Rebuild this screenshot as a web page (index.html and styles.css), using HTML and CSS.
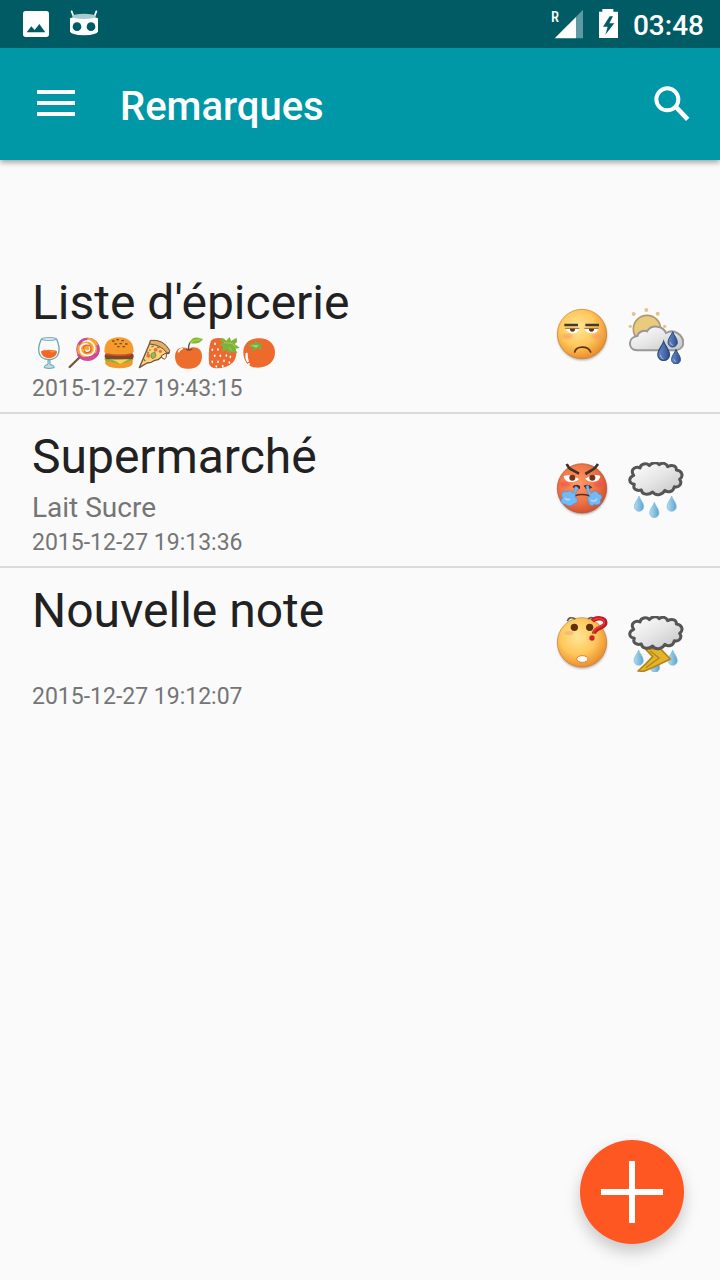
FILE: index.html
```html
<!DOCTYPE html>
<html lang="fr">
<head>
<meta charset="utf-8">
<meta name="viewport" content="width=device-width, initial-scale=1">
<title>Remarques</title>
<link rel="stylesheet" href="styles.css">
</head>
<body>
<svg class="defs" aria-hidden="true">
  <defs>
    <radialGradient id="yellow" cx=".42" cy=".38" r=".65"><stop offset="0" stop-color="#ffe596"/><stop offset=".55" stop-color="#ffc95c"/><stop offset="1" stop-color="#e8892a"/></radialGradient>
    <radialGradient id="red" cx=".42" cy=".4" r=".65"><stop offset="0" stop-color="#ff9a68"/><stop offset=".55" stop-color="#f07848"/><stop offset="1" stop-color="#d04c2c"/></radialGradient>
    <linearGradient id="cloud" x1="0" y1="0" x2="1" y2="1"><stop offset="0" stop-color="#fff"/><stop offset=".5" stop-color="#e6e6e6"/><stop offset="1" stop-color="#c2c2c2"/></linearGradient>
    <linearGradient id="drop" x1="0" y1="0" x2="1" y2="0"><stop offset="0" stop-color="#b4dcf0"/><stop offset="1" stop-color="#5aa4d0"/></linearGradient>
    <linearGradient id="navy" x1="0" y1="0" x2="1" y2="0"><stop offset="0" stop-color="#6b8fc8"/><stop offset="1" stop-color="#2d4f92"/></linearGradient>
    <filter id="soft" x="-20%" y="-20%" width="140%" height="140%"><feGaussianBlur stdDeviation="2.5"/></filter>
    <path id="storm" d="M266 76C254 58 272 48 285 54C287 41 305 37 313 47C322 36 336 36 343 44C352 36 364 40 368 50C382 43 395 48 394 60C411 62 417 78 404 88C413 101 402 114 388 110C385 126 369 129 360 121C351 137 331 138 323 126C309 137 291 134 289 120C274 124 262 116 268 103C250 99 250 83 266 76Z" fill="url(#cloud)" stroke="#555" stroke-width="9" stroke-linejoin="round"/>
    <path id="raindrop" d="M0-24C4-12 14-4 14 8A14 14 0 0 1-14 8C-14-4-4-12 0-24Z"/>
  </defs>
</svg>

<header class="top">
  <div class="status">
    <div class="status-group notices">
      <svg width="28" height="28" viewBox="66 30 84 84" aria-label="Image"><rect x="69" y="33" width="78" height="78" rx="8" fill="#fff"/><path d="M80 97L94 79L104 90L118 72L136 97Z" fill="#005b64"/></svg>
      <svg width="30" height="28" viewBox="207 30 90 84" aria-label="Système"><path d="M214 32L221 50M290 32L283 50" stroke="#fff" stroke-width="5"/><path d="M210 55Q252 36 294 55V94Q292 105 252 106Q212 105 210 94Z" fill="#fff"/><ellipse cx="252" cy="49" rx="35" ry="8" fill="#a5cdd0"/><circle cx="231" cy="80" r="13" fill="#005b64"/><circle cx="273" cy="80" r="13" fill="#005b64"/></svg>
    </div>
    <div class="status-group system">
      <svg width="33" height="30" viewBox="63 27 99 90" aria-label="Réseau"><path d="M138 50L159 29V115H138Z" fill="#5e9a9f"/><path d="M74 115L138 51V115Z" fill="#fff"/><text x="63" y="67" class="roaming">R</text></svg>
      <svg class="battery" width="21" height="30" viewBox="207 27 63 90" aria-label="Batterie"><path d="M220 27H253V35H267V114H210V35H220Z" fill="#fff"/><path d="M242 49L222 80H236L229 104L256 70H241L252 49Z" fill="#005b64"/></svg>
      <time class="clock">03:48</time>
    </div>
  </div>
  <div class="bar">
    <button class="icon-button" aria-label="Menu"><svg width="40" height="30" viewBox="108 267 120 90"><path d="M111 276H225M111 309H225M111 342H225" stroke="#fff" stroke-width="12"/></svg></button>
    <h1 class="heading">Remarques</h1>
    <button class="icon-button" aria-label="Rechercher"><svg width="38" height="38" viewBox="369 255 114 114"><circle cx="412" cy="298" r="33" fill="none" stroke="#fff" stroke-width="12"/><path d="M435 319L442 325L473 358" fill="none" stroke="#fff" stroke-width="14"/></svg></button>
  </div>
</header>

<main class="content">
  <ul class="notes">
    <li class="note">
      <div class="note-text">
        <h2 class="note-title">Liste d'épicerie</h2>
        <div class="note-body foods">
          <svg viewBox="36 33 105 105"><path d="M63 79Q86 70 111 79C111 91 101 99 87 100C73 99 64 91 63 79Z" fill="#f26722"/><path d="M66 78Q76 70 88 79T109 76" fill="#fa8b42"/><path d="M64 43C50 73 53 103 87 104C120 103 123 73 110 43Z" fill="none" stroke="#6ba5b5" stroke-width="4"/><ellipse cx="87" cy="42" rx="23" ry="4" fill="#edf7fa" stroke="#6ba5b5" stroke-width="3"/><path d="M84 105H90V118Q103 120 103 128Q87 133 72 128Q72 120 84 118Z" fill="#bddbe3" stroke="#6ba5b5" stroke-width="3"/></svg>
          <svg viewBox="141 33 105 105"><path d="M183 93L149 126" stroke="#785340" stroke-width="7" stroke-linecap="round"/><circle cx="204" cy="73" r="35" fill="#d34c9c"/><path d="M204 38C231 39 244 66 235 86C229 80 219 88 204 95C190 99 180 94 175 87C165 66 178 40 204 38Z" fill="#f8a62c"/><path d="M187 50C211 39 229 60 222 79C214 97 184 94 181 75C179 56 199 52 208 63C217 76 199 85 196 74" fill="none" stroke="#fff" stroke-width="5"/><path d="M176 59Q186 41 202 42M233 60Q239 82 226 94M196 103Q182 101 174 88" fill="none" stroke="#c94aa0" stroke-width="8"/><path d="M190 72C190 56 213 57 213 72C213 85 195 87 193 76" fill="none" stroke="#eb5b44" stroke-width="4"/></svg>
          <svg viewBox="246 33 105 105"><path d="M256 103H338V116Q334 129 297 130Q258 129 256 115Z" fill="#f49a29"/><path d="M253 103Q260 115 270 109Q278 117 287 112Q295 124 307 111Q318 118 324 110Q334 112 341 102L335 96H257Z" fill="#8ab53c"/><path d="M259 99Q285 108 333 99L312 110L300 117L288 109Z" fill="#f9d65b"/><rect x="254" y="85" width="87" height="18" rx="9" fill="#85442e"/><path d="M253 80Q252 38 297 37Q341 38 341 80Q338 91 297 91Q254 90 253 80Z" fill="#f59a2b"/><path d="M257 84Q297 93 337 84L332 91Q296 95 259 91Z" fill="#c95132"/><path d="M278 48h4M291 44h4M306 47h4M285 57h4M300 56h4M317 57h4M293 65h4M309 65h4" stroke="#704827" stroke-width="4" stroke-linecap="round"/></svg>
          <svg viewBox="-39 33 105 105"><path d="M2 48Q39 42 58 81Q56 89 49 84L42 90Q33 97 24 104Q18 106 12 107Q3 114-9 114L-32 128Z" fill="#fcd27b" stroke="#71513e" stroke-width="4" stroke-linejoin="round"/><path d="M1 46Q41 42 59 76Q59 86 49 82Q34 60-1 57Z" fill="#e6ad64" stroke="#71513e" stroke-width="3"/><path d="M49 84V97Q44 107 36 99L34 92Z" fill="#fff3cc" stroke="#71513e" stroke-width="3"/><g fill="#f07048"><circle cx="17" cy="74" r="6"/><circle cx="-5" cy="92" r="6"/><circle cx="31" cy="79" r="5"/><circle cx="0" cy="75" r="3"/></g><path d="M-11 80L-3 82L-8 88M4 86L15 81L18 94L9 101L3 97Z" fill="#9eb650" stroke="#60743a" stroke-width="2"/><path d="M4 66l7-3M-19 103l5 5M21 66l8 3" stroke="#6d7b45" stroke-width="4"/></svg>
          <svg viewBox="66 33 105 105"><path d="M115 72C130 61 158 67 156 96C154 124 132 133 115 131C95 133 76 122 75 96C75 69 96 62 115 72Z" fill="#ed6d2c"/><path d="M108 72Q116 79 127 71" fill="none" stroke="#8c4426" stroke-width="4"/><path d="M116 75Q114 60 122 50" fill="none" stroke="#654536" stroke-width="4"/><path d="M119 53Q126 34 145 38L159 42Q146 62 119 53Z" fill="#87b92f"/><path d="M122 52Q136 43 151 44" fill="none" stroke="#abd65a" stroke-width="3"/><path d="M86 80Q89 73 96 71" stroke="#fff" stroke-width="5" stroke-linecap="round" fill="none"/></svg>
          <svg viewBox="171 33 105 105"><path d="M183 47Q192 36 219 40L257 73Q264 91 250 111Q231 131 196 130Q180 128 177 115Q174 69 183 47Z" fill="#ed6930"/><path d="M207 43L222 41L228 48L239 36L243 48L260 38L261 51L254 57L269 68L255 72L263 85L247 81L237 85L229 75L216 80L218 64L207 61L218 53Z" fill="#7fb23b"/><path d="M222 53L247 55L258 68M237 67L246 77" fill="none" stroke="#a9cf59" stroke-width="3"/><path d="M195 55v3M187 73v3M204 72v3M194 91v3M211 91v3M187 109v3M204 109v3M222 106v3M241 94v3M218 122v3M238 111v3M229 90v3M199 123v2" stroke="#fff" stroke-width="5" stroke-linecap="round"/></svg>
          <svg viewBox="276 33 105 105"><path d="M280 83C279 60 294 41 322 40C351 36 374 53 375 80C376 110 354 127 323 128C296 128 281 110 280 83Z" fill="#ed6a2c"/><path d="M297 57L314 56L315 46L326 56L340 55L332 63L337 75L323 69L307 80L310 68L299 66Z" fill="#6fb248"/><path d="M303 61L326 60L319 68" fill="#acd66e"/><path d="M290 87Q288 98 293 108" stroke="#fff" stroke-width="7" stroke-linecap="round" fill="none"/><circle cx="297" cy="117" r="3" fill="#fff"/></svg>
        </div>
        <time class="note-date">2015-12-27 19:43:15</time>
      </div>
      <div class="note-icons">
        <svg viewBox="27 39 168 168" role="img" aria-label="Maussade"><circle cx="112" cy="122" r="74" fill="#8b7b6c" opacity=".6" filter="url(#soft)"/><circle cx="111" cy="117" r="74" fill="url(#yellow)" stroke="#c77b30" stroke-width="2"/><g fill="#f6936c" opacity=".55" filter="url(#soft)"><ellipse cx="67" cy="124" rx="16" ry="8"/><ellipse cx="155" cy="124" rx="16" ry="8"/></g><path d="M60 100H103Q101 115 82 115Q65 114 60 100ZM118 100H161Q158 115 140 115Q121 114 118 100Z" fill="#fff"/><path d="M60 100H103M118 100H161" stroke="#a45e27" stroke-width="3"/><path d="M75 101H90V106Q82 115 75 106ZM132 101H147V106Q139 115 132 106Z" fill="#683210"/><path d="M58 90H99M121 90H162" stroke="#46382c" stroke-width="8"/><path d="M89 171C94 152 128 151 137 171" fill="none" stroke="#623014" stroke-width="5" stroke-linecap="round"/></svg>
        <svg viewBox="249 39 168 168" role="img" aria-label="Éclaircies et pluie"><g fill="#e3c58b"><circle cx="304" cy="45" r="6"/><circle cx="266" cy="57" r="6"/><circle cx="338" cy="56" r="6"/><circle cx="256" cy="94" r="5"/><circle cx="359" cy="94" r="5"/></g><circle cx="306" cy="102" r="41" fill="#eaca7d" stroke="#b09a72" stroke-width="5"/><path d="M276 166C247 164 248 126 277 123C281 108 299 105 306 109C319 88 354 91 363 114C388 99 415 122 415 144C414 159 401 166 388 166Z" fill="url(#cloud)" stroke="#989898" stroke-width="6"/><g fill="url(#navy)" stroke="#2c477e" stroke-width="3"><use href="#raindrop" transform="translate(383 134)"/><use href="#raindrop" transform="translate(356 169) scale(1.25)"/><use href="#raindrop" transform="translate(393 186) scale(.95)"/></g><path d="M376 142q1 9 8 9M346 180q2 10 9 12M387 193q1 6 6 7" fill="none" stroke="#9bb6df" stroke-width="3"/></svg>
      </div>
    </li>
    <li class="note">
      <div class="note-text">
        <h2 class="note-title">Supermarché</h2>
        <p class="note-body">Lait Sucre</p>
        <time class="note-date">2015-12-27 19:13:36</time>
      </div>
      <div class="note-icons">
        <svg viewBox="27 36 168 168" role="img" aria-label="En colère"><circle cx="112" cy="119" r="74" fill="#725d55" opacity=".6" filter="url(#soft)"/><circle cx="111" cy="115" r="74" fill="url(#red)" stroke="#ae553c" stroke-width="2"/><g fill="#f34d4d" opacity=".6" filter="url(#soft)"><ellipse cx="60" cy="103" rx="17" ry="8"/><ellipse cx="163" cy="103" rx="17" ry="8"/></g><path d="M56 78Q75 70 102 87Q92 98 72 95Q57 92 56 78ZM121 86Q148 70 166 78Q164 95 145 95Q128 96 121 86Z" fill="#fff"/><circle cx="82" cy="83" r="9" fill="#75351d"/><circle cx="142" cy="83" r="9" fill="#75351d"/><path d="M65 42Q72 56 80 59L102 71M159 42Q149 56 143 59L121 72" fill="none" stroke="#3f3028" stroke-width="8"/><path d="M84 112Q90 102 103 109Q105 117 99 115M117 109Q130 102 139 112Q131 118 121 114" fill="#532d21" stroke="#532d21" stroke-width="4"/><path d="M90 137Q110 130 133 137" fill="none" stroke="#602d20" stroke-width="5"/><g fill="#73b9f5" stroke="#4c8ed7" stroke-width="2"><path d="M92 108L101 115C91 126 89 134 92 143C103 149 96 162 86 161C80 170 65 169 61 162C48 164 43 150 53 144C45 132 53 121 65 126C72 120 82 124 83 130C88 126 87 116 92 108ZM123 108L131 106C132 117 134 125 139 130C145 120 159 122 161 132C174 134 173 147 165 150C172 162 156 168 148 163C139 172 130 163 132 155C123 149 128 139 136 139C127 130 125 122 123 108Z"/></g><path d="M59 144Q67 153 75 147M137 151Q151 157 156 146" fill="none" stroke="#acdafb" stroke-width="5"/></svg>
        <svg viewBox="249 36 168 168" role="img" aria-label="Pluie"><use href="#storm"/><g fill="url(#drop)" stroke="#83bcdb" stroke-width="2"><use href="#raindrop" transform="translate(282 162)"/><use href="#raindrop" transform="translate(328 181)"/><use href="#raindrop" transform="translate(380 162)"/></g></svg>
      </div>
    </li>
    <li class="note">
      <div class="note-text">
        <h2 class="note-title">Nouvelle note</h2>
        <p class="note-body"></p>
        <time class="note-date">2015-12-27 19:12:07</time>
      </div>
      <div class="note-icons">
        <svg viewBox="27 33 168 168" role="img" aria-label="Perplexe"><circle cx="112" cy="117" r="74" fill="#8b7b6c" opacity=".6" filter="url(#soft)"/><circle cx="111" cy="112" r="74" fill="url(#yellow)" stroke="#c77b30" stroke-width="2"/><ellipse cx="72" cy="84" rx="13" ry="6" fill="#f4a17c" opacity=".5"/><path d="M67 49Q72 32 91 42M129 42Q139 33 151 44" fill="none" stroke="#62594d" stroke-width="5"/><circle cx="88" cy="67" r="11" fill="#60300e"/><circle cx="134" cy="67" r="11" fill="#60300e"/><ellipse cx="112" cy="162" rx="17" ry="10" fill="#fff" stroke="#e4803d" stroke-width="3"/><path d="M142 48C154 35 180 38 181 53C182 71 148 65 147 86" fill="none" stroke="#c0191f" stroke-width="13"/><path d="M144 46C156 36 177 39 178 53C179 66 147 65 145 84" fill="none" stroke="#ed383b" stroke-width="5"/><circle cx="141" cy="99" r="8" fill="#cf2428"/></svg>
        <svg viewBox="249 33 168 168" role="img" aria-label="Orage"><g fill="url(#drop)" stroke="#83bcdb" stroke-width="2"><use href="#raindrop" transform="translate(281 159)"/><use href="#raindrop" transform="translate(330 180)"/><use href="#raindrop" transform="translate(383 159)"/></g><path d="M301 132L323 155L303 176L279 198L296 199L325 187L376 162L346 131Z" fill="#e2b42c" stroke="#b78418" stroke-width="5" stroke-linejoin="round"/><path d="M315 137L342 159L303 188" fill="none" stroke="#b8821b" stroke-width="4"/><use href="#storm" y="-3"/></svg>
      </div>
    </li>
  </ul>
</main>

<button class="fab" aria-label="Ajouter une note"><svg width="64" height="64" viewBox="0 0 64 64"><path d="M32 1V63M1 32H63" stroke="#fff" stroke-width="6" /></svg></button>
</body>
</html>
```
FILE: styles.css
```css
* {
  box-sizing: border-box;
}

body {
  margin: 0;
  min-height: 100vh;
  background: #fafafa;
  color: #212121;
  font-family: Roboto, "Noto Sans", sans-serif;
}

svg {
  display: block;
  flex: none;
}

.defs {
  position: absolute;
  width: 0;
  height: 0;
}

button {
  padding: 0;
  border: 0;
  background: none;
  cursor: pointer;
}

.top {
  background: #0097a7;
  color: #fff;
  box-shadow: 0 2px 6px rgba(0, 0, 0, 0.4);
}

.status {
  display: flex;
  align-items: center;
  justify-content: space-between;
  height: 48px;
  padding: 0 16px 0 22px;
  background: #005b64;
}

.status-group {
  display: flex;
  align-items: center;
}

.notices {
  gap: 19px;
}

.system {
  gap: 14px;
}

.roaming {
  fill: #fff;
  font-family: "Roboto Condensed", Roboto, sans-serif;
  font-size: 44px;
  font-weight: 500;
}

.clock {
  font-size: 28px;
  font-weight: 500;
  line-height: 48px;
  padding-top: 4px;
}

.bar {
  display: flex;
  align-items: center;
  height: 112px;
  padding: 0 29px 0 36px;
}

.heading {
  flex: 1;
  margin: 0;
  padding: 6px 0 0 44px;
  font-size: 40px;
  font-weight: 500;
  line-height: 48px;
}

.content {
  padding-top: 100px;
}

.notes {
  margin: 0;
  padding: 0;
  list-style: none;
}

.note {
  display: flex;
  align-items: center;
  justify-content: space-between;
  padding: 15px 36px 9px 32px;
}

.note + .note {
  border-top: 2px solid #dadada;
}

.note-title {
  margin: 0;
  font-size: 48px;
  font-weight: 400;
  line-height: 56px;
}

.note-body {
  height: 44px;
  margin: 0;
  color: #757575;
  font-size: 28px;
  line-height: 46px;
}

.foods {
  display: flex;
  align-items: center;
}

.foods svg {
  width: 35px;
  height: 35px;
}

.note-date {
  display: block;
  color: #757575;
  font-size: 23px;
  line-height: 28px;
}

.note-icons {
  display: flex;
  gap: 18px;
  padding-bottom: 6px;
}

.note-icons svg {
  width: 56px;
  height: 56px;
}

.fab {
  position: fixed;
  right: 36px;
  bottom: 36px;
  display: grid;
  place-items: center;
  width: 104px;
  height: 104px;
  border-radius: 50%;
  background: #ff5722;
  box-shadow: 0 8px 16px rgba(0, 0, 0, 0.2);
}
```
